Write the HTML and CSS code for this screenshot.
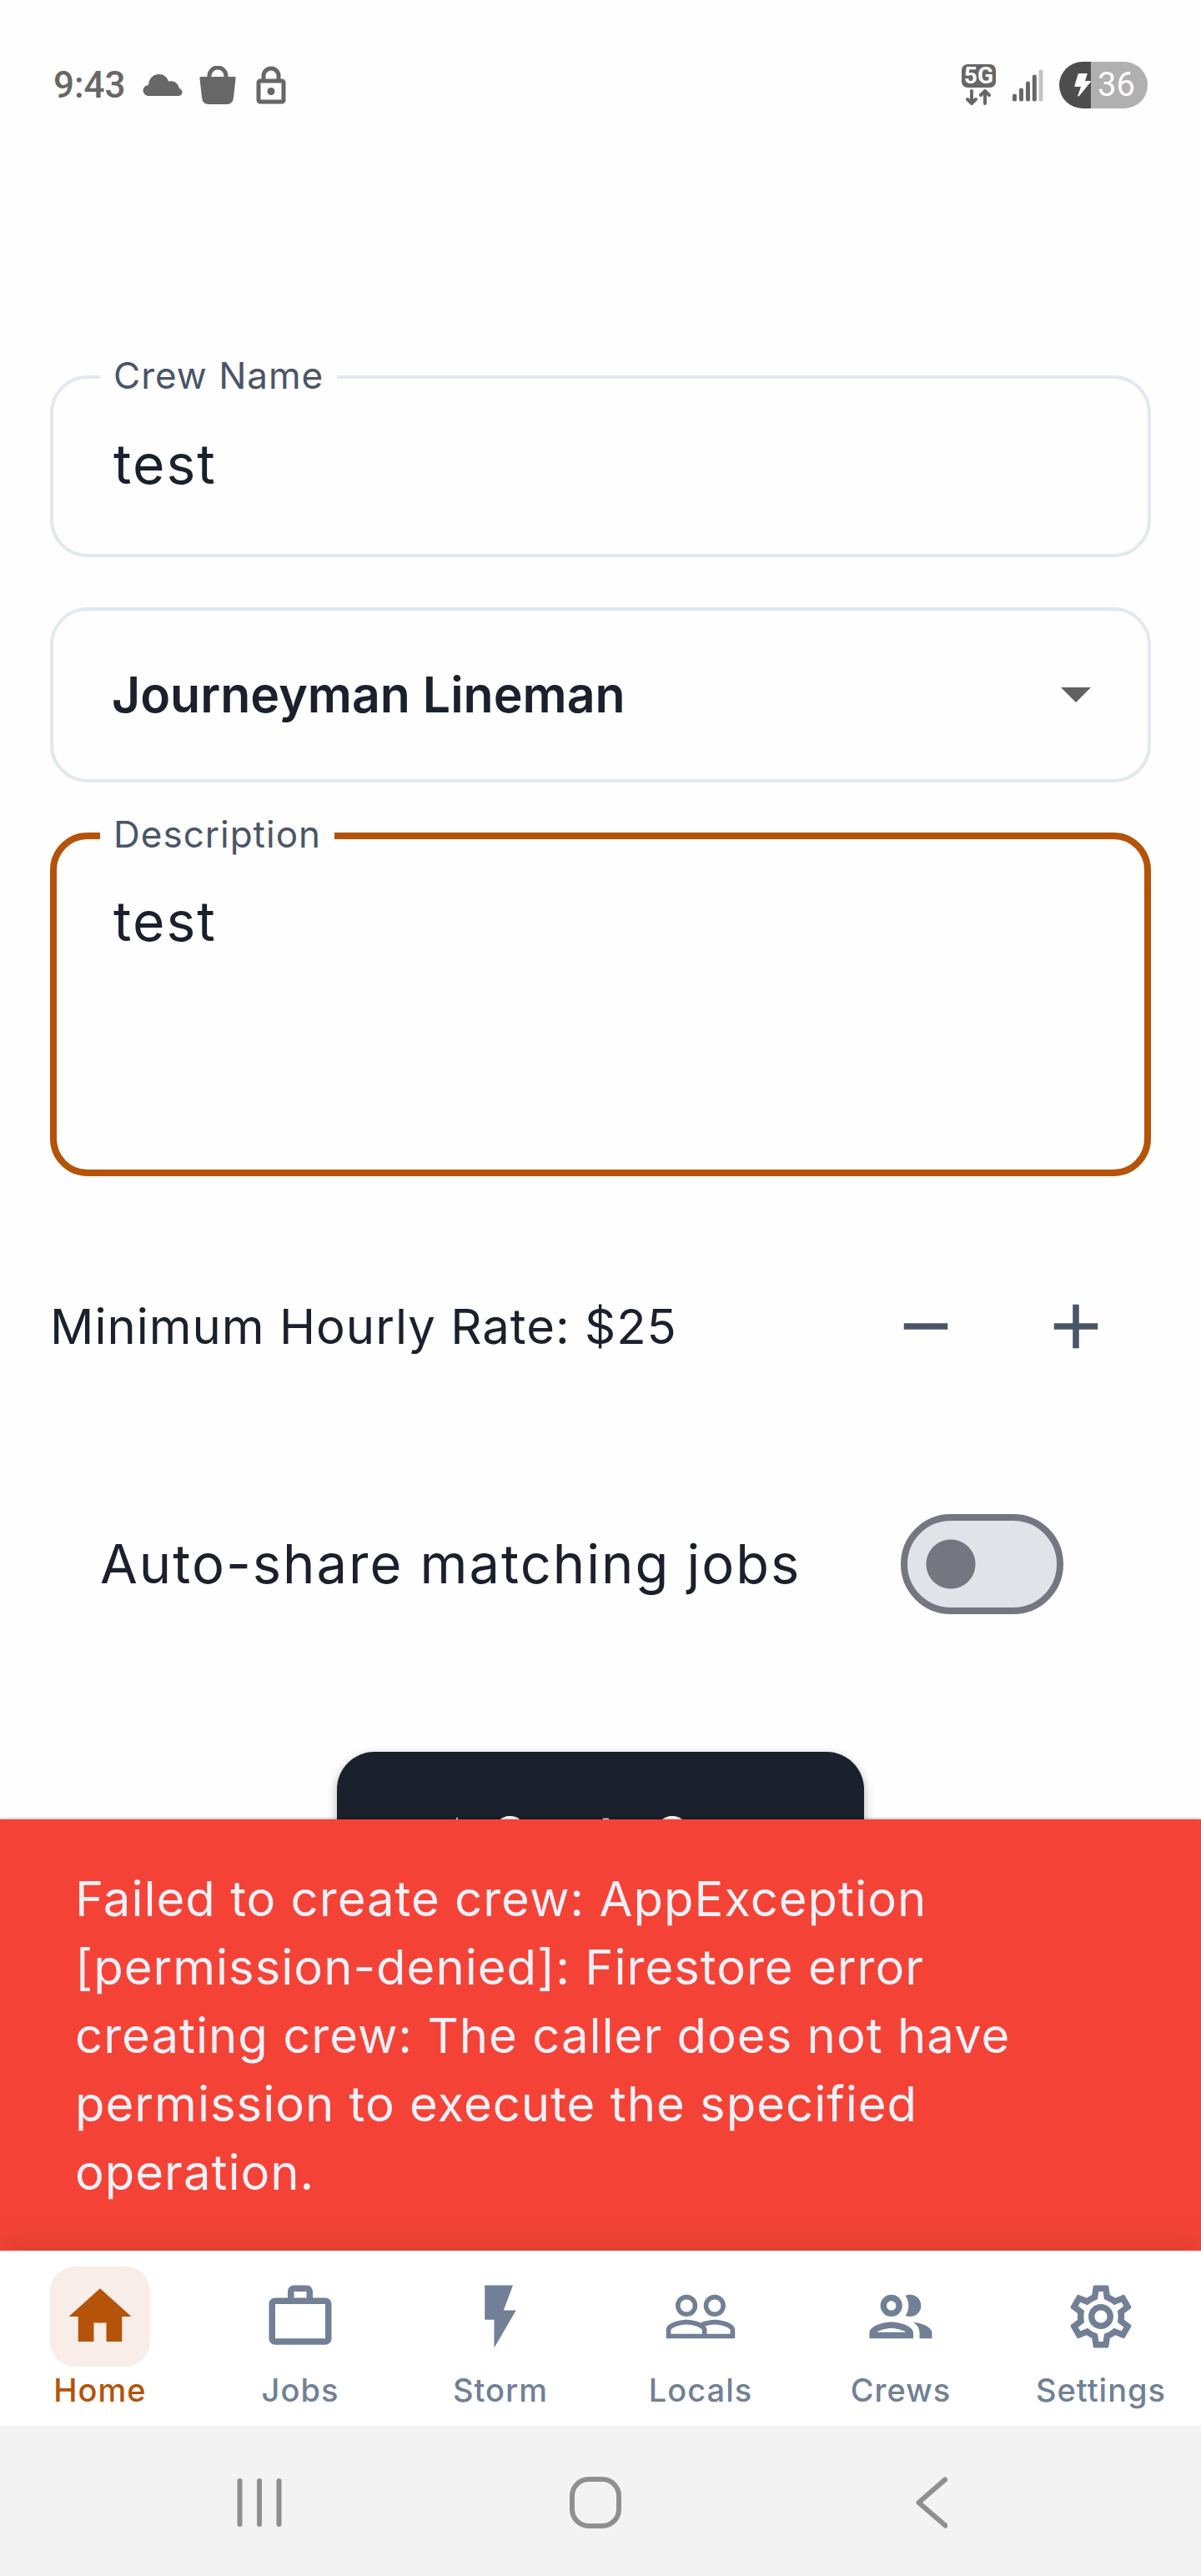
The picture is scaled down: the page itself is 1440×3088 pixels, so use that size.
FILE: index.html
```html
<!DOCTYPE html>
<html lang="en">
<head>
<meta charset="utf-8">
<meta name="viewport" content="width=device-width, initial-scale=1">
<title>Create Crew</title>
<link rel="stylesheet" href="styles.css">
</head>
<body>
<header class="status">
  <div class="status-group">
    <span class="clock">9:43</span>
    <svg class="cloud" width="48" height="28" viewBox="0 0 48 28" aria-hidden="true"><path d="M7 27a6.500 6.500 0 0 1 0-13C8 5 13 1 19.500 1c6 0 9.500 3 11.500 8.500 6-1 11 1 13 8.500 2 1 3.500 2.500 3.500 4.500 0 3-2 4.500-5 4.500z"/></svg>
    <svg width="44" height="46" viewBox="0 0 44 46" aria-hidden="true"><path d="M12 14V12a10 10 0 0 1 20 0v2" fill="none" stroke="currentColor" stroke-width="5"/><path d="M2 13h40a1.500 1.500 0 0 1 1.500 2L41 38q-1 8-8 8H11q-7 0-8-8L.5 15A1.500 1.500 0 0 1 2 13z"/></svg>
    <svg class="lock" width="36" height="46" viewBox="0 0 36 46" aria-hidden="true"><g fill="none" stroke="currentColor" stroke-width="5"><path d="M9 18V12a9 9 0 0 1 18 0v6"/><rect x="3" y="18" width="30" height="25" rx="2"/></g><circle cx="18" cy="30.500" r="4.500"/></svg>
  </div>
  <div class="status-group">
    <div class="network">
      <span class="network-name">5G</span>
      <svg width="30" height="20" viewBox="0 0 30 20" fill="none" stroke="currentColor" stroke-width="4" stroke-linecap="round" stroke-linejoin="round" aria-hidden="true"><path d="M7 2v15M2 12l5 5 5-5M23 17V2M18 7l5-5 5 5"/></svg>
    </div>
    <svg class="signal" width="36" height="40" viewBox="0 0 36 40" stroke="currentColor" stroke-width="5" stroke-linecap="round" aria-hidden="true"><path d="M2.500 33v4M10.500 26v11M18.500 18v19M26.300 10v27"/><path d="M34 4v33" stroke="#c4c4c4"/></svg>
    <div class="battery">
      <svg width="20" height="28" viewBox="0 0 20 28" aria-hidden="true"><path d="M6 0h9q1 0 .6 1L13 9h6q1.500 0 .5 1.500L6 27q-2 1.500-1.600-.7L8 16H1.500Q0 16 .5 14.500L4.500 1Q5 0 6 0z"/></svg>
      <span>36</span>
    </div>
  </div>
</header>

<main class="screen">
  <form class="crew-form">
    <fieldset class="field">
      <legend><label for="crew-name">Crew Name</label></legend>
      <input id="crew-name" type="text" value="test">
    </fieldset>
    <div class="select-field">
      <select id="classification" aria-label="Classification">
        <option>Journeyman Lineman</option>
      </select>
      <svg class="caret" width="36" height="18" viewBox="0 0 36 18" aria-hidden="true"><path d="M0 0h36L18 18z"/></svg>
    </div>
    <fieldset class="field field-active">
      <legend><label for="description">Description</label></legend>
      <textarea id="description" rows="3">test</textarea>
    </fieldset>

    <div class="rate">
      <span>Minimum Hourly Rate: $25</span>
      <div class="stepper">
        <button type="button" aria-label="Decrease rate"><svg width="90" height="90" viewBox="0 0 24 24"><path d="M5 11h14v2H5z"/></svg></button>
        <button type="button" aria-label="Increase rate"><svg width="90" height="90" viewBox="0 0 24 24"><path d="M19 13h-6v6h-2v-6H5v-2h6V5h2v6h6z"/></svg></button>
      </div>
    </div>

    <div class="share">
      <label for="auto-share">Auto-share matching jobs</label>
      <input id="auto-share" class="switch" type="checkbox" role="switch">
    </div>

    <button class="submit" type="submit">
      <svg width="68" height="68" viewBox="0 0 24 24" aria-hidden="true"><path d="M12 5l3 6h4v2h-6v6h-2v-6H5v-2h4z"/></svg>
      Create Crew
    </button>
  </form>
</main>

<div class="snackbar" role="alert">Failed to create crew: AppException [permission-denied]: Firestore error creating crew: The caller does not have permission to execute the specified operation.</div>

<nav class="tabs">
  <a class="tab tab-current" href="#home" aria-current="page">
    <span class="tab-icon"><svg viewBox="0 0 24 24"><path d="M10 20v-6h4v6h5v-8h3L12 3 2 12h3v8z"/></svg></span>Home</a>
  <a class="tab" href="#jobs">
    <span class="tab-icon"><svg viewBox="0 0 24 24"><path fill-rule="evenodd" d="M14 6V4h-4v2h4zM4 8v11h16V8H4zm16-2c1.110 0 2 .89 2 2v11c0 1.110-.89 2-2 2H4c-1.110 0-2-.89-2-2V8c0-1.110.89-2 2-2h4V4c0-1.110.89-2 2-2h4c1.110 0 2 .89 2 2v2h4z"/></svg></span>Jobs</a>
  <a class="tab" href="#storm">
    <span class="tab-icon"><svg viewBox="0 0 24 24"><path d="M7 2v11h3v9l7-12h-4l3-8z"/></svg></span>Storm</a>
  <a class="tab" href="#locals">
    <span class="tab-icon"><svg viewBox="0 0 24 24"><path d="M16.500 13c-1.200 0-3.070.34-4.500 1-1.430-.67-3.300-1-4.500-1C5.330 13 1 14.080 1 16.250V19h22v-2.750c0-2.170-4.330-3.250-6.500-3.250zm-4 4.500h-10v-1.250c0-.54 2.560-1.750 5-1.750s5 1.210 5 1.750v1.250zm9 0H14v-1.250c0-.46-.2-.86-.52-1.220.88-.3 1.960-.53 3.020-.53 2.440 0 5 1.210 5 1.750v1.250zM7.500 12c1.930 0 3.500-1.570 3.500-3.500S9.430 5 7.500 5 4 6.570 4 8.500 5.570 12 7.500 12zm0-5.500c1.100 0 2 .9 2 2s-.9 2-2 2-2-.9-2-2 .9-2 2-2zm9 5.500c1.930 0 3.500-1.570 3.500-3.500S18.430 5 16.500 5 13 6.570 13 8.500s1.570 3.500 3.500 3.500zm0-5.500c1.100 0 2 .9 2 2s-.9 2-2 2-2-.9-2-2 .9-2 2-2z"/></svg></span>Locals</a>
  <a class="tab" href="#crews">
    <span class="tab-icon"><svg viewBox="0 0 24 24"><path d="M9 13.750c-2.340 0-7 1.170-7 3.500V19h14v-1.750c0-2.330-4.660-3.500-7-3.500zM4.340 17c.84-.58 2.870-1.250 4.660-1.250s3.820.67 4.660 1.250H4.340zM9 12c1.930 0 3.500-1.570 3.500-3.500S10.930 5 9 5 5.500 6.570 5.500 8.500 7.070 12 9 12zm0-5c.83 0 1.500.67 1.500 1.500S9.830 10 9 10s-1.500-.67-1.500-1.500S8.170 7 9 7zm7.040 6.810c1.160.84 1.960 1.960 1.960 3.440V19h4v-1.750c0-2.020-3.500-3.170-5.960-3.440zM15 12c1.930 0 3.500-1.570 3.500-3.500S16.930 5 15 5c-.54 0-1.040.13-1.500.35.63.89 1 1.980 1 3.150s-.37 2.260-1 3.150c.46.22.96.35 1.500.35z"/></svg></span>Crews</a>
  <a class="tab" href="#settings">
    <span class="tab-icon"><svg viewBox="0 0 24 24"><path d="M19.430 12.980c.04-.32.07-.64.07-.98 0-.34-.03-.66-.07-.98l2.110-1.650c.19-.15.24-.42.12-.64l-2-3.460c-.09-.16-.26-.25-.44-.25-.06 0-.12.01-.17.03l-2.490 1c-.52-.4-1.080-.73-1.690-.98l-.38-2.650C14.460 2.180 14.250 2 14 2h-4c-.25 0-.46.18-.49.42l-.38 2.650c-.61.25-1.170.59-1.690.98l-2.490-1c-.06-.02-.12-.03-.18-.03-.17 0-.34.09-.43.25l-2 3.460c-.13.22-.07.49.12.64l2.110 1.650c-.04.32-.07.65-.07.98 0 .33.03.66.07.98l-2.110 1.650c-.19.15-.24.42-.12.64l2 3.460c.09.16.26.25.44.25.06 0 .12-.01.17-.03l2.490-1c.52.4 1.080.73 1.690.98l.38 2.650c.03.24.24.42.49.42h4c.25 0 .46-.18.49-.42l.38-2.650c.61-.25 1.170-.59 1.690-.98l2.490 1c.06.02.12.03.18.03.17 0 .34-.09.43-.25l2-3.460c.12-.22.07-.49-.12-.64l-2.110-1.650zm-1.980-1.710c.04.31.05.52.05.73 0 .21-.02.43-.05.73l-.14 1.130.89.7 1.080.84-.7 1.210-1.270-.51-1.040-.42-.9.68c-.43.32-.84.56-1.250.73l-1.060.43-.16 1.130-.2 1.350h-1.400l-.19-1.350-.16-1.130-1.060-.43c-.43-.18-.83-.41-1.230-.71l-.91-.7-1.060.43-1.270.51-.7-1.210 1.080-.84.89-.7-.14-1.130c-.03-.31-.05-.54-.05-.74s.02-.43.05-.73l.14-1.130-.89-.7-1.080-.84.7-1.210 1.270.51 1.040.42.9-.68c.43-.32.84-.56 1.250-.73l1.060-.43.16-1.130.2-1.350h1.390l.19 1.350.16 1.130 1.060.43c.43.18.83.41 1.230.71l.91.7 1.060-.43 1.270-.51.7 1.210-1.070.85-.89.7.14 1.130zM12 8c-2.210 0-4 1.790-4 4s1.790 4 4 4 4-1.790 4-4-1.790-4-4-4zm0 6c-1.100 0-2-.9-2-2s.9-2 2-2 2 .9 2 2-.9 2-2 2z"/></svg></span>Settings</a>
</nav>

<footer class="system">
  <button type="button" aria-label="Recent apps"><svg width="54" height="58" viewBox="0 0 54 58"><path d="M3.500 3v52M27 3v52M50.500 3v52"/></svg></button>
  <button type="button" aria-label="Home screen"><svg width="62" height="62" viewBox="0 0 62 62"><rect x="3" y="3" width="56" height="56" rx="20"/></svg></button>
  <button type="button" aria-label="Back"><svg width="38" height="62" viewBox="0 0 38 62"><path d="M35 3.500L3.500 31 35.500 58.500"/></svg></button>
</footer>
</body>
</html>
```
FILE: styles.css
```css
* {
  box-sizing: border-box;
}

body {
  margin: 0;
  height: 100vh;
  display: flex;
  flex-direction: column;
  background: #fefefe;
  color: #1a202c;
  font-family: Inter, "Liberation Sans", sans-serif;
  font-size: 58px;
  line-height: 82px;
}

button,
input,
select,
textarea {
  margin: 0;
  border: 0;
  padding: 0;
  background: none;
  color: inherit;
  font: inherit;
  letter-spacing: inherit;
}

svg {
  display: block;
  flex: none;
  fill: currentColor;
}

/* Phone status bar */
.status {
  flex: none;
  display: flex;
  justify-content: space-between;
  align-items: center;
  height: 204px;
  padding: 0 64px;
  color: #676767;
}

.status-group {
  display: flex;
  align-items: center;
  gap: 20px;
}

.clock {
  font: 500 44px/56px Roboto, sans-serif;
}

.lock {
  margin-left: 4px;
}

.network {
  display: flex;
  flex-direction: column;
  align-items: center;
  gap: 2px;
}

.network-name {
  padding: 0 3px;
  border-radius: 7px;
  background: #676767;
  color: #fff;
  font: bold 28px/28px Roboto, sans-serif;
}

.signal {
  overflow: visible;
}

.battery {
  display: flex;
  align-items: center;
  gap: 8px;
  width: 106px;
  height: 56px;
  padding-left: 18px;
  border-radius: 28px;
  background: linear-gradient(90deg, #4d4d4d 38px, #b0b0b0 38px);
  color: #fff;
  font: 40px/56px Roboto, sans-serif;
}

/* Crew form */
.screen {
  flex: 1;
  min-height: 0;
  overflow-y: auto;
  scrollbar-width: none;
}

.crew-form {
  display: flex;
  flex-direction: column;
  gap: 60px;
  padding: 244px 60px 60px;
}

.field {
  min-width: 0;
  margin: -24px 0 0;
  border: 4px solid #e2e8f0;
  border-radius: 45px;
  padding: 32px 72px 64px;
}

.field legend {
  margin-left: -16px;
  padding: 0 16px 4px;
  color: #4a5568;
  font-size: 44px;
  line-height: 52px;
  letter-spacing: 1px;
}

.field input,
.field textarea {
  display: block;
  width: 100%;
  height: 88px;
  outline: 0;
  resize: none;
  font-size: 66px;
  line-height: 88px;
  letter-spacing: 2px;
}

.field textarea {
  height: 264px;
}

.field-active {
  border: 8px solid #b45309;
  padding: 30px 68px 78px;
}

.select-field {
  display: grid;
  align-items: center;
}

.select-field select,
.caret {
  grid-area: 1 / 1;
}

.select-field select {
  appearance: none;
  width: 100%;
  height: 210px;
  border: 4px solid #e2e8f0;
  border-radius: 45px;
  padding: 0 70px;
  font-size: 59px;
  font-weight: 600;
}

.caret {
  justify-self: end;
  margin-right: 72px;
  color: #616161;
  pointer-events: none;
}

.rate {
  display: flex;
  justify-content: space-between;
  align-items: center;
  margin-top: 30px;
  letter-spacing: 1px;
}

.stepper {
  display: flex;
  color: #4a5568;
}

.stepper button {
  display: grid;
  place-items: center;
  width: 180px;
  height: 180px;
}

.share {
  display: flex;
  justify-content: space-between;
  align-items: center;
  margin: 45px 0;
  height: 180px;
  padding: 0 105px 0 60px;
  font-size: 65px;
  letter-spacing: 2px;
}

.switch {
  appearance: none;
  width: 195px;
  height: 120px;
  border: 8px solid #747780;
  border-radius: 60px;
  background: radial-gradient(circle at 52px 50%, #747780 29px, #e2e2e9 30px);
}

.switch:checked {
  background: radial-gradient(circle at 127px 50%, #747780 29px, #e2e2e9 30px);
}

.submit {
  align-self: center;
  display: flex;
  align-items: center;
  gap: 8px;
  height: 196px;
  margin-top: 30px;
  padding: 0 110px;
  border-radius: 45px;
  background: #1a202c;
  box-shadow: 0 4px 12px rgba(0, 0, 0, 0.3);
  color: #fff;
  font-size: 56px;
  font-weight: 600;
}

/* Error message */
.snackbar {
  flex: none;
  padding: 54px 90px 53px;
  background: #f44336;
  box-shadow: 0 0 4px rgba(0, 0, 0, 0.4);
  color: #f0f0f7;
  letter-spacing: 1px;
}

/* Bottom tabs */
.tabs {
  flex: none;
  display: grid;
  grid-template-columns: repeat(6, 1fr);
  height: 210px;
  background: #fff;
  box-shadow: 0 -8px 38px rgba(0, 0, 0, 0.1);
}

.tab {
  display: flex;
  flex-direction: column;
  align-items: center;
  gap: 4px;
  padding-top: 19px;
  color: #718096;
  font-size: 38px;
  font-weight: 500;
  line-height: 48px;
  letter-spacing: 1px;
  text-decoration: none;
}

.tab-icon {
  display: grid;
  place-items: center;
  width: 120px;
  height: 120px;
  border-radius: 30px;
}

.tab-icon svg {
  width: 90px;
  height: 90px;
}

.tab-current {
  color: #b45309;
}

.tab-current .tab-icon {
  background: #f8ede8;
}

/* System navigation */
.system {
  position: relative;
  flex: none;
  display: grid;
  grid-template-columns: repeat(3, 1fr);
  height: 180px;
  padding: 4px 122px 0 109px;
  background: #f3f3f3;
  color: #8f8f8f;
}

.system button {
  display: grid;
  place-items: center;
}

.system svg {
  fill: none;
  stroke: currentColor;
  stroke-width: 6;
  stroke-linecap: round;
  stroke-linejoin: round;
}
```
